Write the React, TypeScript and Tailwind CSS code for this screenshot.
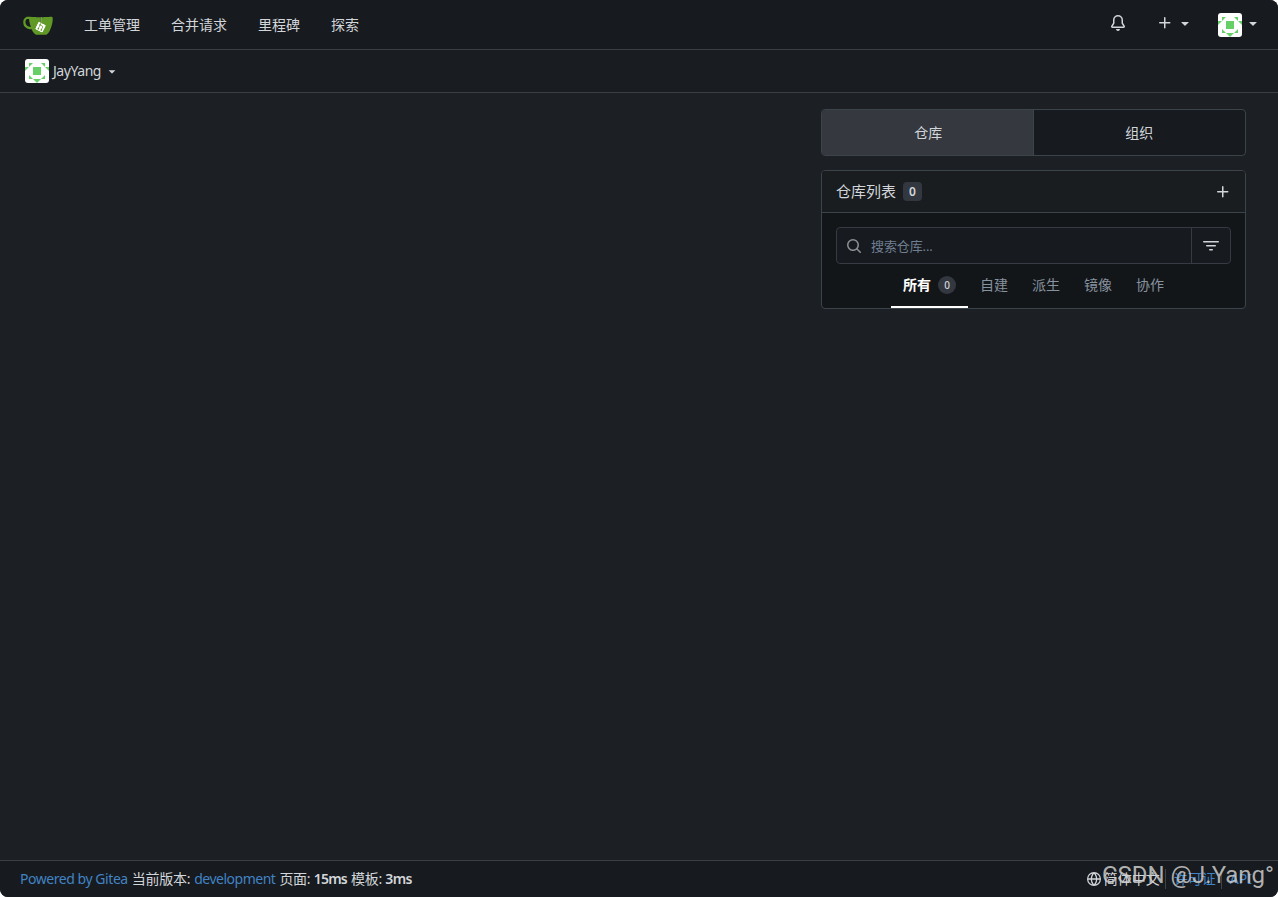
import React from 'react';

const icons = {
    bell: 'M8 16a2 2 0 0 0 1.985-1.75c.017-.137-.097-.25-.235-.25h-3.5c-.138 0-.252.113-.235.25A2 2 0 0 0 8 16ZM3 5a5 5 0 0 1 10 0v2.947c0 .05.015.098.042.139l1.703 2.555A1.519 1.519 0 0 1 13.482 13H2.518a1.516 1.516 0 0 1-1.263-2.36l1.703-2.554A.255.255 0 0 0 3 7.947Zm5-3.5A3.5 3.5 0 0 0 4.5 5v2.947c0 .346-.102.683-.294.97l-1.703 2.556a.017.017 0 0 0-.003.01l.001.006c0 .002.002.004.004.006l.006.004.007.001h10.964l.007-.001.006-.004.004-.006.001-.007a.017.017 0 0 0-.003-.01l-1.703-2.554a1.745 1.745 0 0 1-.294-.97V5A3.5 3.5 0 0 0 8 1.5Z',
    plus: 'M7.75 2a.75.75 0 0 1 .75.75V7h4.25a.75.75 0 0 1 0 1.5H8.5v4.25a.75.75 0 0 1-1.5 0V8.5H2.75a.75.75 0 0 1 0-1.5H7V2.75A.75.75 0 0 1 7.75 2Z',
    down: 'm4.427 7.427 3.396 3.396a.25.25 0 0 0 .354 0l3.396-3.396A.25.25 0 0 0 11.396 7H4.604a.25.25 0 0 0-.177.427Z',
    search: 'M10.68 11.74a6 6 0 0 1-7.922-8.982 6 6 0 0 1 8.982 7.922l3.04 3.04a.749.749 0 0 1-.326 1.275.749.749 0 0 1-.734-.215ZM11.5 7a4.499 4.499 0 1 0-8.997 0A4.499 4.499 0 0 0 11.5 7Z',
    filter: 'M.75 3h14.5a.75.75 0 0 1 0 1.5H.75a.75.75 0 0 1 0-1.5ZM3 7.75A.75.75 0 0 1 3.75 7h8.5a.75.75 0 0 1 0 1.5h-8.5A.75.75 0 0 1 3 7.75Zm3 4a.75.75 0 0 1 .75-.75h2.5a.75.75 0 0 1 0 1.5h-2.5a.75.75 0 0 1-.75-.75Z',
    globe: 'M8 0a8 8 0 1 1 0 16A8 8 0 0 1 8 0ZM5.78 8.75a9.64 9.64 0 0 0 1.363 4.177c.255.426.542.832.857 1.215.245-.296.551-.705.857-1.215A9.64 9.64 0 0 0 10.22 8.75Zm4.44-1.5a9.64 9.64 0 0 0-1.363-4.177c-.307-.51-.612-.919-.857-1.215a9.927 9.927 0 0 0-.857 1.215A9.64 9.64 0 0 0 5.78 7.25Zm-5.944 1.5H1.543a6.507 6.507 0 0 0 4.666 5.5c-.123-.181-.24-.365-.352-.552-.715-1.192-1.437-2.874-1.581-4.948Zm-2.733-1.5h2.733c.144-2.074.866-3.756 1.58-4.948.12-.197.237-.381.353-.552a6.507 6.507 0 0 0-4.666 5.5Zm10.181 1.5c-.144 2.074-.866 3.756-1.58 4.948-.12.197-.237.381-.353.552a6.507 6.507 0 0 0 4.666-5.5Zm2.733-1.5a6.507 6.507 0 0 0-4.666-5.5c.123.181.24.365.353.552.714 1.192 1.436 2.874 1.58 4.948Z',
};

function Icon({ name, className = '' }: { name: keyof typeof icons; className?: string }) {
    return (
        <svg viewBox="0 0 16 16" fill="currentColor" className={`shrink-0 ${className}`} aria-hidden="true">
            <path d={icons[name]} />
        </svg>
    );
}

function Logo() {
    return (
        <svg viewBox="0 0 640 640" className="size-[30px] shrink-0" aria-label="Gitea">
            <path fill="#fff" d="M395.9,484.2l-126.9-61c-12.5-6-17.9-21.2-11.8-33.8l61-126.9c6-12.5,21.2-17.9,33.8-11.8c17.2,8.3,27.1,13,27.1,13l-0.1-109.2l16.7-0.1l0.1,117.1c0,0,57.4,24.2,83.1,40.1c3.7,2.3,10.2,6.8,12.9,14.4c2.1,6.1,2,13.1-1,19.3l-61,126.9C423.6,484.9,408.4,490.3,395.9,484.2z" />
            <path fill="#609926" d="M622.7,149.8c-4.1-4.1-9.6-4-9.6-4s-117.2,6.6-177.9,8c-13.3,0.3-26.5,0.6-39.6,0.7c0,39.1,0,78.2,0,117.2c-5.5-2.6-11.1-5.3-16.6-7.9c0-36.4-0.1-109.2-0.1-109.2c-29,0.4-89.2-2.2-89.2-2.2s-141.4-7.1-156.8-8.5c-9.8-0.6-22.5-2.1-39,1.5c-8.7,1.8-33.5,7.4-53.8,26.9C-4.9,212.4,6.6,276.2,8,285.8c1.7,11.7,6.9,44.2,31.7,72.5c45.8,56.1,144.4,54.8,144.4,54.8s12.1,28.9,30.6,55.5c25,33.1,50.7,58.9,75.7,62c63,0,188.9-0.1,188.9-0.1s12,0.1,28.3-10.3c14-8.5,26.5-23.4,26.5-23.4s12.9-13.8,30.9-45.3c5.5-9.7,10.1-19.1,14.1-28c0,0,55.2-117.1,55.2-231.1C633.2,157.9,624.7,151.8,622.7,149.8z M125.6,353.9c-25.9-8.5-36.9-18.7-36.9-18.7S69.6,321.8,60,295.4c-16.5-44.2-1.4-71.2-1.4-71.2s8.4-22.5,38.5-30c13.8-3.7,31-3.1,31-3.1s7.1,59.4,15.7,94.2c7.2,29.2,24.8,77.7,24.8,77.7S142.5,359.9,125.6,353.9z M425.9,461.5c0,0-6.1,14.5-19.6,15.4c-5.8,0.4-10.3-1.2-10.3-1.2s-0.3-0.1-5.3-2.1l-112.9-55c0,0-10.9-5.7-12.8-15.6c-2.2-8.1,2.7-18.1,2.7-18.1L322,273c0,0,4.8-9.7,12.2-13c0.6-0.3,2.3-1,4.5-1.5c8.1-2.1,18,2.8,18,2.8l110.7,53.7c0,0,12.6,5.7,15.3,16.2c1.9,7.4-0.5,14-1.8,17.2C474.6,363.8,425.9,461.5,425.9,461.5z" />
            <path fill="#609926" d="M326.8,380.2c-8.2,0.1-15.4,5.8-17.3,13.8c-1.9,8,2,16.3,9.1,20c7.7,4,17.5,1.8,22.7-5.4c5.1-7.1,4.3-16.9-1.8-23.1l24-49.1c1.5,0.1,3.7,0.2,6.2-0.5c4.1-0.9,7.1-3.6,7.1-3.6c4.2,1.8,8.6,3.8,13.2,6.1c4.8,2.4,9.3,4.9,13.4,7.3c0.9,0.5,1.8,1.1,2.8,1.9c1.6,1.3,3.4,3.1,4.7,5.5c1.9,5.5-1.9,14.9-1.9,14.9c-2.3,7.6-18.4,40.6-18.4,40.6c-8.1-0.2-15.3,5-17.7,12.5c-2.6,8.1,1.1,17.3,8.9,21.3c7.8,4,17.4,1.7,22.5-5.3c5-6.8,4.6-16.3-1.1-22.6c1.9-3.7,3.7-7.4,5.6-11.3c5-10.4,13.5-30.4,13.5-30.4c0.9-1.7,5.7-10.3,2.7-21.3c-2.5-11.4-12.6-16.7-12.6-16.7c-12.2-7.9-29.2-15.2-29.2-15.2s0-4.1-1.1-7.1c-1.1-3.1-2.8-5.1-3.9-6.3c4.7-9.7,9.4-19.3,14.1-29c-4.1-2-8.1-4-12.2-6.1c-4.8,9.8-9.7,19.7-14.5,29.5c-6.7-0.1-12.9,3.5-16.1,9.4c-3.4,6.3-2.7,14.1,1.9,19.8C343.2,346.5,335,363.3,326.8,380.2z" />
        </svg>
    );
}

function Avatar() {
    return (
        <svg viewBox="0 0 24 24" className="size-6 shrink-0 rounded-[3px] bg-white" aria-hidden="true">
            <path
                fill="#67cf67"
                d="M8 8h8v8H8ZM4 4h4L4 8ZM0 8h4L0 12ZM20 4h-4l4 4ZM24 8h-4l4 4ZM4 16l4 4H4ZM20 16l-4 4h4ZM8 20h8l-4 4Z"
            />
        </svg>
    );
}

const navLinks = ['工单管理', '合并请求', '里程碑', '探索'];
const filters = ['自建', '派生', '镜像', '协作'];

export default function App() {
    return (
        <div className="relative flex h-[897px] w-full flex-col overflow-hidden rounded-lg bg-[#1c1f24] font-['Noto_Sans','Noto_Sans_CJK_SC',sans-serif] text-sm leading-5 text-[#d2d6db]">
            <nav className="flex h-[50px] shrink-0 items-center justify-between border-b border-[#3b3e45] bg-[#171a1e] pr-[17px] pl-[23px]">
                <div className="flex items-center">
                    <Logo />
                    <div className="ml-[31px] flex gap-[31px]">
                        {navLinks.map((link) => (
                            <a key={link} href="#">{link}</a>
                        ))}
                    </div>
                </div>
                <div className="flex items-center">
                    <Icon name="bell" className="mb-[3px] size-4" />
                    <div className="mb-[3px] ml-[31px] flex items-center gap-1">
                        <Icon name="plus" className="size-4" />
                        <Icon name="down" className="size-4" />
                    </div>
                    <div className="ml-[25px] flex items-center gap-[3px]">
                        <Avatar />
                        <Icon name="down" className="mb-[3px] size-4" />
                    </div>
                </div>
            </nav>

            <div className="flex h-[43px] shrink-0 items-center border-b border-[#3b3e45] bg-[#191c20] pl-[25px]">
                <Avatar />
                <span className="ml-1 tracking-[-0.45px]">JayYang</span>
                <Icon name="down" className="ml-1 size-[14px]" />
            </div>

            <main className="flex flex-1 justify-end pt-4 pr-8">
                <div className="flex w-[425px] flex-col gap-[14px]">
                    <div className="grid h-[47px] grid-cols-2 overflow-hidden rounded border border-[#3b444a] bg-[#171a1e]">
                        <button className="border-r border-[#3b444a] bg-[#36383f] pl-0.5">仓库</button>
                        <button>组织</button>
                    </div>

                    <section className="overflow-hidden rounded border border-[#3b444a] bg-[#131619]">
                        <header className="flex h-[42px] items-center justify-between border-b border-[#3b444a] bg-[#1a1d1f] px-[14px]">
                            <h4 className="flex items-center gap-[7px] text-[15px]">
                                <span className="pb-0.5">仓库列表</span>
                                <span className="flex h-[19px] w-[19px] items-center justify-center rounded bg-[#333840] pt-px text-xs font-semibold">0</span>
                            </h4>
                            <Icon name="plus" className="size-4" />
                        </header>
                        <div className="px-[14px] pt-[14px]">
                            <div className="flex h-[37px] rounded border border-[#363a42] bg-[#171a1e]">
                                <div className="flex flex-1 items-center gap-[9px] pl-[9px] text-[#6f7f92]">
                                    <Icon name="search" className="size-4 text-[#8d9196]" />
                                    <span className="text-[13px] tracking-[-0.1px]">搜索仓库...</span>
                                </div>
                                <button className="flex w-[39px] items-center justify-center border-l border-[#363a42]">
                                    <Icon name="filter" className="size-4" />
                                </button>
                            </div>
                            <div className="flex h-[44px] justify-center text-[#87929f]">
                                <div className="flex items-center gap-[7px] border-b-2 border-white px-3 font-bold text-white">
                                    所有
                                    <span className="flex size-[18px] items-center justify-center rounded-full bg-[#333840] text-[10px] font-medium text-[#d2d6db]">0</span>
                                </div>
                                {filters.map((filter) => (
                                    <div key={filter} className="flex items-center border-b-2 border-transparent px-3">{filter}</div>
                                ))}
                            </div>
                        </div>
                    </section>
                </div>
            </main>

            <footer className="flex h-[37px] shrink-0 items-center justify-between border-t border-[#3b3e45] bg-[#171a1e] pr-[26px] pl-5">
                <div className="flex gap-1 tracking-[-0.25px]">
                    <a href="#" className="tracking-[-0.45px] text-[#4183c4]">Powered by Gitea</a>
                    <span>当前版本:</span>
                    <a href="#" className="tracking-[-0.5px] text-[#4183c4]">development</a>
                    <span>页面: <strong className="font-semibold tracking-[-0.8px]">15ms</strong></span>
                    <span>模板: <strong className="font-semibold tracking-[-0.6px]">3ms</strong></span>
                </div>
                <div className="flex items-center">
                    <Icon name="globe" className="mr-[3px] size-[14px]" />
                    <span className="pr-[5px]">简体中文</span>
                    <a href="#" className="border-l border-[#3b444a] pr-[5px] pl-2 text-[#4183c4]">许可证</a>
                    <a href="#" className="border-l border-[#3b444a] pl-2 text-[#4183c4]">API</a>
                </div>
            </footer>

            {/* Watermark */}
            <div className="pointer-events-none absolute right-1 bottom-2 font-[Roboto,sans-serif] text-2xl leading-7 whitespace-nowrap text-[#cccccc]/85">
                CSDN @J.Yang°
            </div>
        </div>
    );
}
